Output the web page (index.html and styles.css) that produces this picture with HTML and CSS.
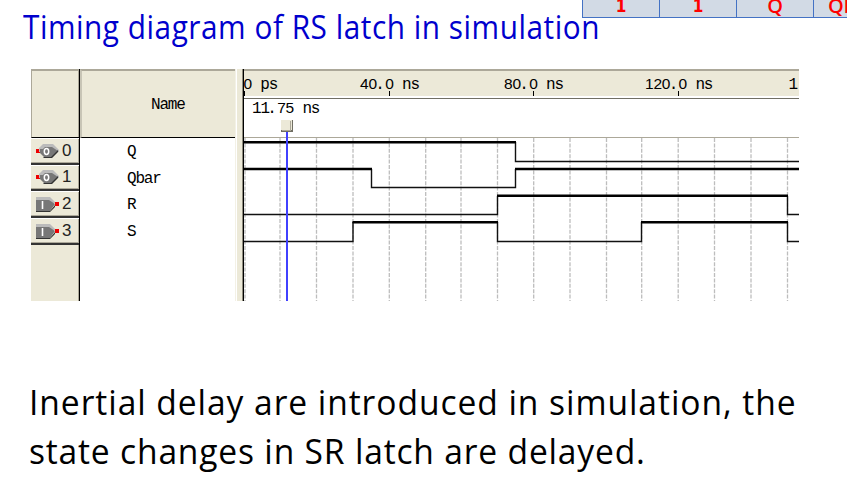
FILE: index.html
```html
<!DOCTYPE html>
<html lang="en">
<head>
<meta charset="utf-8">
<title>Timing diagram of RS latch</title>
<link rel="stylesheet" href="styles.css">
</head>
<body>
<main class="slide">
  <div class="truth"><span class="one">1</span><span class="one">1</span><span>Q</span><span>Qb</span></div>
  <h1 class="title">Timing diagram of RS latch in simulation</h1>
  <section class="panel">
    <div class="pins">
      <div class="pins-head"></div>
      <div class="pin"><svg class="icon" viewBox="0 0 24 18"><path fill="#e00" d="M0 7h4v4H0z"/><path fill="#bbb" d="M3 6l4-4h10l6 6v2H3z"/><path fill="#777" d="M4 7h3l2-2h7l6 4-6 6H8l-4-4z"/><path fill="#333" d="M22 8v2l-6 6H8l-1-1h8z"/><ellipse cx="10.500" cy="9.500" rx="2.200" ry="2.900" fill="none" stroke="#fff" stroke-width="1.500"/></svg><b>0</b></div>
      <div class="pin"><svg class="icon" viewBox="0 0 24 18"><path fill="#e00" d="M0 7h4v4H0z"/><path fill="#bbb" d="M3 6l4-4h10l6 6v2H3z"/><path fill="#777" d="M4 7h3l2-2h7l6 4-6 6H8l-4-4z"/><path fill="#333" d="M22 8v2l-6 6H8l-1-1h8z"/><ellipse cx="10.500" cy="9.500" rx="2.200" ry="2.900" fill="none" stroke="#fff" stroke-width="1.500"/></svg><b>1</b></div>
      <div class="pin"><svg class="icon" viewBox="0 0 24 18"><path fill="#bbb" d="M0 2h14l6 6H0z"/><path fill="#777" d="M0 5h13l6 4-5 7H0z"/><path fill="#333" d="M0 16h14l5-6v2l-5 5H0z"/><path fill="#e00" d="M19 7h4v4h-4z"/><path stroke="#fff" stroke-width="1.600" d="M6.500 6v8"/></svg><b>2</b></div>
      <div class="pin"><svg class="icon" viewBox="0 0 24 18"><path fill="#bbb" d="M0 2h14l6 6H0z"/><path fill="#777" d="M0 5h13l6 4-5 7H0z"/><path fill="#333" d="M0 16h14l5-6v2l-5 5H0z"/><path fill="#e00" d="M19 7h4v4h-4z"/><path stroke="#fff" stroke-width="1.600" d="M6.500 6v8"/></svg><b>3</b></div>
    </div>
    <div class="names">
      <div class="names-head">Name</div>
      <div class="name">Q</div><div class="name">Qbar</div><div class="name">R</div><div class="name">S</div>
    </div>
    <div class="splitter"></div>
    <svg class="waves" viewBox="244 69 555 232">
      <path fill="#ece9d8" d="M244 69h555v28H244z"/>
      <path fill="#aca899" d="M244 69h555v2H244z"/>
      <path fill="#fff" d="M244 96h555v1H244z"/>
      <path fill="#716f64" d="M244 98h555v1H244z"/>
      <path fill="#aca899" d="M244 137h555v1H244z"/>
      <g class="label">
        <text x="243.500" y="89"><tspan class="num">0</tspan> ps</text><text x="360" y="89"><tspan class="num">40</tspan><tspan dx="-1.500">.</tspan><tspan dx="1.500" class="num">0</tspan> ns</text><text x="504" y="89"><tspan class="num">80</tspan><tspan dx="-1.500">.</tspan><tspan dx="1.500" class="num">0</tspan> ns</text><text x="645" y="89"><tspan class="num">120</tspan><tspan dx="-1.500">.</tspan><tspan dx="1.500" class="num">0</tspan> ns</text><text x="788.500" y="89">1</text>
        <text x="252" y="113">11<tspan dx="-1.500">.</tspan><tspan dx="1.500" class="num">75</tspan> ns</text>
      </g>
      <path class="tick" d="M244.500 91v5M389.500 91v5M533.500 91v5M678.500 91v5"/>
      <path class="grid" d="M245 138v163M280 138v163M316.500 138v163M353 138v163M389.300 138v163M425.700 138v163M461 138v163M497.500 138v163M533.700 138v163M570 138v163M606.500 138v163M641.700 138v163M678.200 138v163M714.500 138v163M751 138v163M787.500 138v163"/>
      <path class="low" d="M515.500 142v19.500H799M371.500 169v18.500H515.500V169M244 214.500H497.500V196M787.500 196v18.500H799M244 241.500H353V222M497.500 222v19.500H641.500V222M787.500 222v19.500H799"/>
      <path class="high" d="M244 142.300H516M244 169H372M515 169H799M497 195.700H788M352.500 222.300H498M641 222.300H788"/>
      <path fill="#4141ff" d="M286 132h2v169h-2z"/>
      <path fill="#716f64" d="M281 120h12v12H281z"/><path fill="#ece9d8" d="M281 120h11v10H281z"/><path fill="#aca899" d="M282 130h8v-9h1v10h-9z"/>
    </svg>
  </section>
  <p class="note"><span class="line first">Inertial delay are introduced in simulation, the</span><span class="line second">state changes in SR latch are delayed.</span></p>
</main>
</body>
</html>
```
FILE: styles.css
```css
* { box-sizing: border-box; }
body { margin: 0; background: #fff; }
.slide { position: relative; width: 847px; height: 491px; overflow: hidden; padding-top: 5px; }
.truth {
  position: absolute; top: 0; left: 582px; width: 308px; height: 18px;
  display: grid; grid-template-columns: repeat(4, 77px);
  background: #d2dae5; border-bottom: 1px solid #4472c4;
  font: 600 20px/25px "Open Sans", sans-serif; color: #f00; text-align: center;
}
.truth span { border-left: 1px solid #4472c4; margin-top: -7px; height: 25px; }
.truth span:last-child { padding-left: 14px; text-align: left; }
.truth .one { font: 700 17px/27px "DejaVu Sans Condensed", "DejaVu Sans", sans-serif; }
.title {
  position: relative; margin: 0 0 0 23px; height: 44px; width: max-content;
  font: 400 32px/43px "Open Sans", sans-serif; color: #0000cd; letter-spacing: .570px;
  white-space: nowrap; transform: scaleX(.93); transform-origin: 0 0;
}
.panel { display: flex; width: 768px; height: 232px; margin: 20px 0 0 31px; font-family: "Liberation Mono", monospace; }
.pins { width: 49px; background: #ece9d8; border-right: 1px solid #000; box-shadow: inset -1px 0 #aca899; }
.pins-head { height: 69px; border-top: 2px solid #aca899; border-bottom: 1px solid #000; border-left: 1px solid #aca899; }
.pin { display: flex; align-items: center; height: 26.650px; border-bottom: 2px solid #333; box-shadow: inset 0 1px #fff, inset 0 -1px #aca899; padding: 1px 0 0 5px; }
.icon { width: 24px; height: 18px; flex: none; }
.pin b { font: 400 17px/20px "Liberation Sans", sans-serif; color: #222; margin-left: 2px; }
.names { width: 155px; font-size: 16px; letter-spacing: -1.200px; }
.names-head { height: 69px; background: #ece9d8; border-top: 2px solid #aca899; border-bottom: 1px solid #000; border-left: 2px solid #c8c5b6; padding: 0 0 0 69px; line-height: 68px; }
.name { height: 26.650px; line-height: 29px; padding-left: 47px; }
.splitter { width: 9px; background: linear-gradient(to right, #f3f1e6 0 1px, #fff 1px 2px, #ece9d8 2px 7px, #8f8c7e 7px 8px, #000 8px 9px); }
.waves { width: 555px; height: 232px; display: block; }
.label { font-size: 16px; letter-spacing: -1.200px; }
.num { font-family: "Liberation Sans", sans-serif; font-size: 15.500px; letter-spacing: -.220px; }
.tick { stroke: #000; }
.grid { stroke: #bdbdbd; stroke-width: 1.300; stroke-dasharray: 4 1.400; }
.low { fill: none; stroke: #111; stroke-width: 1.400; }
.high { fill: none; stroke: #000; stroke-width: 2.600; }
.note { margin: 76px 0 0 29px; font: 400 35px/49px "Open Sans", sans-serif; color: #000; white-space: nowrap; }
.line { display: block; width: max-content; transform-origin: 0 0; transform: scaleX(.96); }
.first { letter-spacing: .970px; }
.second { letter-spacing: .840px; }
```
